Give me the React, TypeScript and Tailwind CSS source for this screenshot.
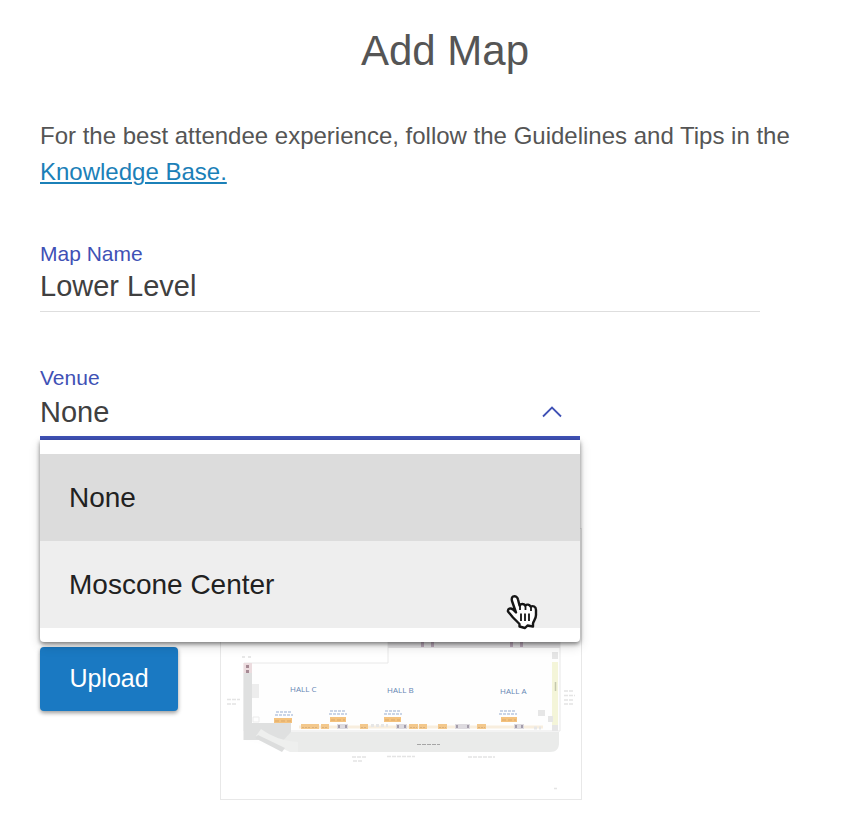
import { useState } from "react";

const venues = ["None", "Moscone Center"];

function FieldLabel({ htmlFor, children }: { htmlFor: string; children: string }) {
  return (
    <label htmlFor={htmlFor} className="block text-[21px] leading-8 text-[#3f51b5]">
      {children}
    </label>
  );
}

function HandPointer() {
  return (
    <svg viewBox="0 0 34 36" className="h-9 w-[34px]" aria-hidden="true">
      <path
        d="M7 2.500C9.500 1.500 11.500 3 12 5.500L13.500 11.500C15 9.500 18 9.500 19 11.500C21 10 23.500 10.500 24.500 12.500C27 11.500 30 12.500 30 16V21C30 25 27.500 27 27 29.500V32.500L21.500 31.500L19 34L13.500 32.500V30L7 23.500L2 17.500C1.500 14.500 4.500 13.500 7 15.500L10 18.500L6 7C5.500 5 5.500 3.500 7 2.500Z"
        fill="#fff"
        stroke="#161616"
        strokeWidth="2.400"
        strokeLinejoin="round"
      />
      <path d="M14 12V16M19.500 12V16M25 13V17M15 19.500V27M19 19.500V27M23 19.500V27" fill="none" stroke="#161616" strokeWidth="1.800" />
    </svg>
  );
}

const booths = [
  [274, 718, 18], [330, 717, 16], [384, 717, 17], [501, 717, 16],
];
const kiosks = [
  [301, 10], [311, 8], [321, 8], [360, 8], [409, 9], [419, 8], [438, 9], [477, 9],
];
const rooms = [[337, 11], [396, 11], [455, 15], [514, 10]];
const boothLabels = [[284, 713], [338, 712], [393, 712], [508, 712]];

function FloorPlan() {
  return (
    <svg viewBox="221 529 360 270" className="block w-full font-['Open_Sans',Arial,sans-serif]" role="img" aria-label="Lower level floor plan">
      <path d="M244 663H388V641H560V731H244Z" fill="#fefefe" stroke="#e8e8e8" />
      <path d="M388 642H560V648H388Z" fill="#e4e3e5" />
      <path d="M421 642h3v5h-3zM431 642h3v5h-3zM510 642h3v5h-3zM520 642h3v5h-3z" fill="#bba8ba" />
      <path d="M243.500 663H252V723H291V732H559V744L552 752H292L244 740Z" fill="#fefefe" />
      <path d="M243.500 673H252V723H291V732L297 740V752L259 740H243.500Z" fill="#dfe0e0" />
      <path d="M291 732H559V743C559 749 556 752 550 752H292L280 744Z" fill="#eaebea" />
      <path d="M261 729C272 737 284 741 298 742V752H290L256 736Z" fill="#eeefee" />
      <path d="M255 738L258 735L285 748L282 752Z" fill="#dcdddd" />
      <path d="M243.500 663H252V673H243.500Z" fill="#ecdcdf" />
      <path d="M246 665h3v3h-3zM246 670h3v3h-3z" fill="#a68a94" />
      <path d="M242 656h3v2h-3zM248 656h3v2h-3z" fill="#e8e8e8" />
      <rect x="252" y="684" width="7" height="14" fill="#ededed" />
      <path d="M253 717h6v5h-6z" fill="none" stroke="#ececec" />
      <rect x="552" y="662" width="6" height="68" fill="#f4f5d9" />
      <path d="M552 652h6v7h-6zM538 710h7v6h-7zM548 716h5v6h-5zM552 725h6v6h-6z" fill="#e6e6e6" />
      <path d="M555.500 682V691" stroke="#c5c8ae" strokeWidth="1.500" />
      <path d="M299 727H543" stroke="#f8eede" strokeWidth="3" />
      {rooms.map(([x, w]) => (
        <g key={x}>
          <rect x={x} y="724" width={w} height="5" fill="#dddadf" />
          <path d={`M${x + 1} 725h2v3h-2zM${x + w - 3} 725h2v3h-2z`} fill="#a49dab" />
        </g>
      ))}
      {kiosks.map(([x, w]) => (
        <g key={x}>
          <rect x={x} y="724" width={w} height="5" fill="#f3c88c" />
          <path d={`M${x + 1} 727.500h${w - 2}`} stroke="#dab07c" strokeDasharray="2 1" />
        </g>
      ))}
      {booths.map(([x, y, w]) => (
        <g key={x}>
          <rect x={x} y={y} width={w} height="5" fill="#f4c27e" />
          <path d={`M${x + 1} ${y + 3}h${w - 2}`} stroke="#dba868" strokeDasharray="4 2" />
        </g>
      ))}
      {boothLabels.map(([x, y]) => (
        <path key={x} d={`M${x - 8} ${y - 1}h16M${x - 9} ${y + 2}h18`} stroke="#b9c8df" strokeWidth="1.500" strokeDasharray="3 1" />
      ))}
      <path d="M371 725.500H388M534 728H541" stroke="#e6e6e6" strokeWidth="3" strokeDasharray="3 2" />
      <path d="M417 744.500H440" stroke="#a6a6a6" strokeDasharray="4 1" />
      <path d="M227 699.500H240M227 704H236M352 757H366M353 761H363M387 756.500H415M468 757H495M564 691H574M564 695.500H575M564 700H573M564 704H573M554 788.500H557" stroke="#e4e4e4" strokeWidth="1.500" strokeDasharray="4 1" />
      <g fill="#6585b3" fontSize="8">
        <text x="290" y="692">HALL C</text>
        <text x="387" y="693">HALL B</text>
        <text x="500" y="694">HALL A</text>
      </g>
    </svg>
  );
}

export default function App() {
  const [mapName, setMapName] = useState("Lower Level");
  const [venue, setVenue] = useState("None");
  const [open, setOpen] = useState(true);

  return (
    <main className="min-h-screen bg-white pl-10 pr-3 pt-6 pb-8 font-['Liberation_Sans',Arial,sans-serif] text-[#555]">
      <h1 className="text-center text-[42px] leading-[54px]">Add Map</h1>
      <p className="mt-10 text-[24px] leading-9">
        For the best attendee experience, follow the Guidelines and Tips in the <br />
        <a href="#knowledge-base" className="text-[#1b80b8] underline decoration-2 underline-offset-2">
          Knowledge Base.
        </a>
      </p>

      <div className="mt-12 max-w-[720px]">
        <FieldLabel htmlFor="map-name">Map Name</FieldLabel>
        <input
          id="map-name"
          value={mapName}
          onChange={(e) => setMapName(e.target.value)}
          className="block h-[42px] w-full border-b border-[#dedede] pb-2 text-[29px] leading-9 text-[#404040] outline-none"
        />
      </div>

      <div className="relative mt-[50px] max-w-[540px]">
        <FieldLabel htmlFor="venue">Venue</FieldLabel>
        <div className="relative">
          <select
            id="venue"
            value={venue}
            onChange={(e) => setVenue(e.target.value)}
            onClick={() => setOpen(!open)}
            className="block h-[46px] w-full appearance-none border-b-4 border-[#3f51b5] bg-transparent pb-2 text-[29px] leading-9 text-[#404040] outline-none"
          >
            {venues.map((name) => (
              <option key={name}>{name}</option>
            ))}
          </select>
          <svg viewBox="0 0 20 12" className="pointer-events-none absolute right-[18px] top-3 h-3 w-5" aria-hidden="true">
            <path d="M1 10.500L10 1.500L19 10.500" fill="none" stroke="#3f51b5" strokeWidth="1.800" />
          </svg>
        </div>
        {open && (
          <div
            role="listbox"
            aria-label="Venue"
            className="absolute inset-x-0 top-full z-10 rounded-b bg-white py-3.5 text-[28px] text-[#212121] shadow-[0_2px_4px_rgba(0,0,0,0.45),0_4px_12px_rgba(0,0,0,0.16)]"
          >
            {venues.map((name) => (
              <button
                key={name}
                type="button"
                role="option"
                aria-selected={name === venue}
                onClick={() => {
                  setVenue(name);
                  setOpen(false);
                }}
                className="block w-full cursor-pointer bg-[#eee] px-[29px] py-6 text-left leading-[39px] aria-selected:bg-[#dcdcdc]"
              >
                {name}
              </button>
            ))}
            <div className="pointer-events-none absolute bottom-3 right-10">
              <HandPointer />
            </div>
          </div>
        )}
      </div>

      <div className="mt-22 flex items-start gap-[42px]">
        <button
          type="button"
          className="mt-[119px] h-16 w-[138px] shrink-0 rounded bg-[#1a79c2] text-[25px] text-white shadow-[0_2px_4px_rgba(0,0,0,0.4)]"
        >
          Upload
        </button>
        <div className="w-full max-w-[362px] border border-[#e8e8e8]">
          <FloorPlan />
        </div>
      </div>
    </main>
  );
}
